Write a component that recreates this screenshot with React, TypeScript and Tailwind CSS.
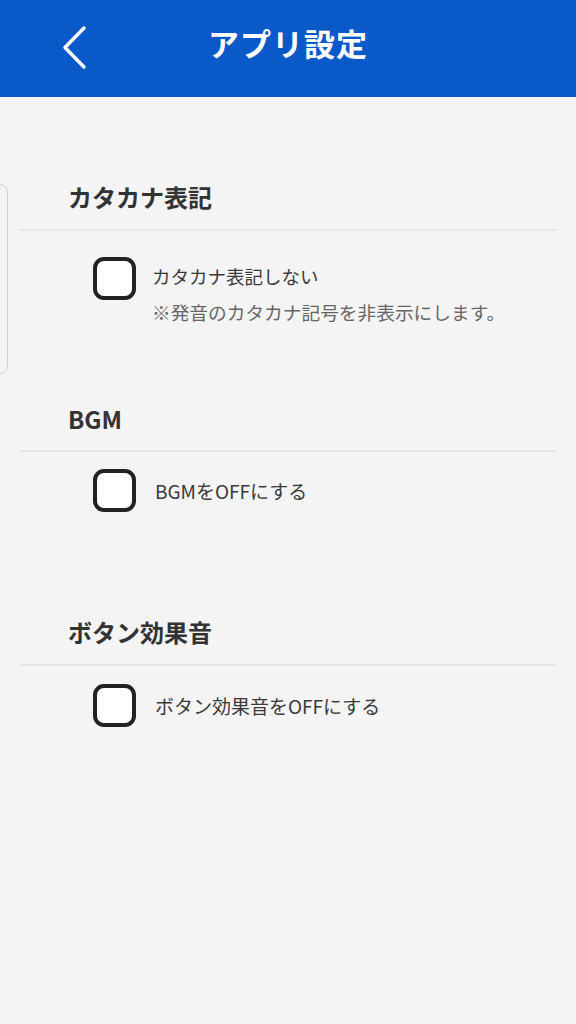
import React, { useState } from 'react';

const FONT = "font-['Noto_Sans_CJK_JP','Noto_Sans',sans-serif]";

function CheckBox({ checked, onToggle }: { checked: boolean; onToggle: () => void }) {
  return (
    <button
      onClick={onToggle}
      className="w-[43px] h-[43px] shrink-0 rounded-[11px] border-[4px] border-[#222] bg-white flex items-center justify-center"
    >
      {checked && (
        <svg width="24" height="24" viewBox="0 0 24 24" fill="none" stroke="#222" strokeWidth="3" strokeLinecap="round" strokeLinejoin="round">
          <path d="M4 12l5 5L20 6" />
        </svg>
      )}
    </button>
  );
}

export default function App() {
  const [katakana, setKatakana] = useState(false);
  const [bgm, setBgm] = useState(false);
  const [se, setSe] = useState(false);

  return (
    <div className={`w-[576px] min-h-[1024px] bg-[#f4f4f4] ${FONT}`}>
      <header className="relative h-[97px] bg-[#0a59c9] flex items-center justify-center">
        <button className="absolute left-[58px] top-[22px] w-[34px] h-[50px] flex items-center justify-center">
          <svg width="34" height="50" viewBox="0 0 34 50" fill="none" stroke="#ffffff" strokeWidth="3.5" strokeLinecap="round" strokeLinejoin="round">
            <path d="M26 6L7 25.5L26 45" />
          </svg>
        </button>
        <h1 className="text-white text-[31px] font-bold tracking-[1px] -mt-[10px]">アプリ設定</h1>
      </header>

      <main className="relative">
        {/* edge of a card peeking in from the left */}
        <div className="absolute left-[-12px] top-[87px] w-[20px] h-[190px] rounded-[8px] border border-[#cfcfcf]" />

        {/* カタカナ表記 */}
        <section className="pt-[85px]">
          <h2 className="pl-[68px] text-[24px] leading-[30px] font-bold text-[#333]">カタカナ表記</h2>
          <div className="mt-[17px] mx-[20px] h-[2px] bg-[#e6e6e6]" />
          <div className="mt-[26px] pl-[93px] flex items-start gap-[16px]">
            <CheckBox checked={katakana} onToggle={() => setKatakana(p => !p)} />
            <div className="pt-[7px]">
              <p className="text-[18.5px] leading-[24px] text-[#3a3a3a]">カタカナ表記しない</p>
              <p className="mt-[12px] text-[18.7px] leading-[24px] text-[#666]">※発音のカタカナ記号を非表示にします。</p>
            </div>
          </div>
        </section>

        {/* BGM */}
        <section className="mt-[80px]">
          <h2 className="pl-[68px] text-[24px] leading-[30px] font-bold text-[#333]">BGM</h2>
          <div className="mt-[16px] mx-[20px] h-[2px] bg-[#e6e6e6]" />
          <div className="mt-[17px] pl-[93px] flex items-center gap-[19px]">
            <CheckBox checked={bgm} onToggle={() => setBgm(p => !p)} />
            <p className="text-[19px] leading-[24px] text-[#3a3a3a]">BGMをOFFにする</p>
          </div>
        </section>

        {/* ボタン効果音 */}
        <section className="mt-[105px]">
          <h2 className="pl-[68px] text-[24px] leading-[30px] font-bold text-[#333]">ボタン効果音</h2>
          <div className="mt-[17px] mx-[20px] h-[2px] bg-[#e6e6e6]" />
          <div className="mt-[18px] pl-[93px] flex items-center gap-[19px]">
            <CheckBox checked={se} onToggle={() => setSe(p => !p)} />
            <p className="text-[19px] leading-[24px] text-[#3a3a3a]">ボタン効果音をOFFにする</p>
          </div>
        </section>
      </main>
    </div>
  );
}
